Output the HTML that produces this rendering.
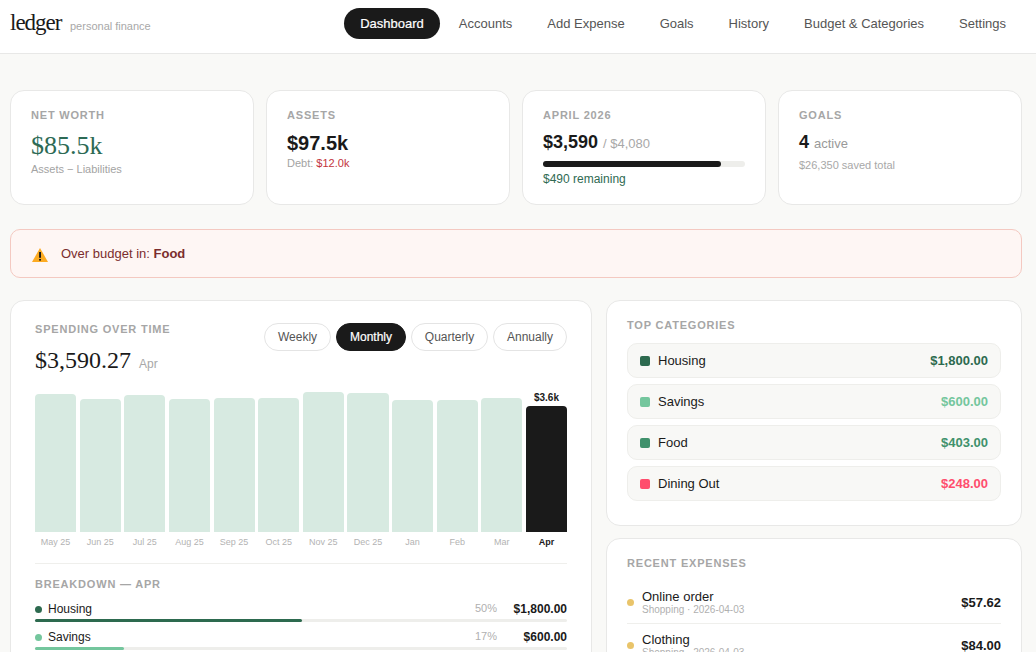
<!DOCTYPE html>
<html><head><meta charset="utf-8">
<style>
*{box-sizing:border-box;margin:0;padding:0}
html,body{width:1036px;height:652px;overflow:hidden}
body{background:#f9f9f7;font-family:"Liberation Sans",sans-serif;color:#1a1a1a;position:relative}
.t{position:absolute;line-height:20px;white-space:nowrap}
.hdr{position:absolute;left:0;top:0;width:1036px;height:54px;background:#fff;border-bottom:1px solid #e8e8e7}
.logo{left:10px;top:13px;font-family:"Liberation Serif",serif;font-size:23px;letter-spacing:-1px;color:#1a1a1a}
.sub{left:70px;top:16px;font-size:11px;color:#a8a8a8}
.nav{position:absolute;right:14px;top:8px;display:flex;gap:3px}
.nav a{display:block;font-size:13px;line-height:15px;padding:8px 16px;border-radius:16px;color:#555;text-decoration:none;white-space:nowrap}
.nav a.on{background:#1a1a1a;color:#fff;-webkit-text-stroke:0.2px #fff}

.card{position:absolute;top:90px;width:244px;height:115px;background:#fff;border:1px solid #e8e8e7;border-radius:14px}
.lbl{font-size:11px;font-weight:bold;letter-spacing:0.8px;color:#a6a6a6}
.alert{position:absolute;left:10px;top:229px;width:1012px;height:49px;background:#fef6f4;border:1px solid #f4c9c1;border-radius:10px}
.panel{position:absolute;background:#fff;border:1px solid #e8e8e7;border-radius:14px}
.seg{position:absolute;top:323px;height:28px;border:1px solid #e4e4e4;border-radius:14px;font-size:12px;line-height:26px;text-align:center;color:#555;background:#fff}
.seg.on{background:#1a1a1a;border-color:#1a1a1a;color:#fff;-webkit-text-stroke:0.2px #fff}
.bar{position:absolute;background:#d7eae1;border-radius:4px 4px 0 0}
.bar.on{background:#1a1a1a}
.mlab{position:absolute;top:532px;line-height:20px;font-size:9px;color:#b3b3b3;text-align:center;white-space:nowrap}
.mlab.on{color:#1a1a1a;font-weight:bold}
.row{position:absolute;left:627px;width:374px;height:35px;background:#f8f8f6;border:1px solid #eeeeeb;border-radius:10px}
.sq{position:absolute;left:12px;top:12px;width:10px;height:10px;border-radius:2px}
.rname{left:658px;font-size:13px}
.ramt{right:48px;font-size:13px;font-weight:bold;text-align:right}
</style></head><body>
<div class="hdr">
  <div class="nav">
    <a class="on">Dashboard</a><a>Accounts</a><a>Add Expense</a><a>Goals</a><a>History</a><a>Budget &amp; Categories</a><a>Settings</a>
  </div>
</div>
<div class="t logo">ledger</div>
<div class="t sub">personal finance</div>

<div class="card" style="left:10px"></div>
<div class="card" style="left:266px"></div>
<div class="card" style="left:522px"></div>
<div class="card" style="left:778px"></div>

<div class="t lbl" style="left:31px;top:105px">NET WORTH</div>
<div class="t" style="left:31px;top:136px;font-family:'Liberation Serif',serif;font-size:26px;color:#2d6a55">$85.5k</div>
<div class="t" style="left:31px;top:159px;font-size:11px;color:#a3a3a3">Assets − Liabilities</div>

<div class="t lbl" style="left:287px;top:105px">ASSETS</div>
<div class="t" style="left:287px;top:133px;font-size:20px;font-weight:bold">$97.5k</div>
<div class="t" style="left:287px;top:153px;font-size:11px;color:#a3a3a3">Debt: <span style="color:#c3343c">$12.0k</span></div>

<div class="t lbl" style="left:543px;top:105px">APRIL 2026</div>
<div class="t" style="left:543px;top:132px;font-size:18px;font-weight:bold">$3,590</div>
<div class="t" style="left:603px;top:134px;font-size:13px;color:#a8a8a8">/ $4,080</div>
<div style="position:absolute;left:543px;top:161px;width:202px;height:6px;border-radius:3px;background:#eeeeeb"><div style="width:178px;height:6px;border-radius:3px;background:#1a1a1a"></div></div>
<div class="t" style="left:543px;top:169px;font-size:12px;color:#2f6a52">$490 remaining</div>

<div class="t lbl" style="left:799px;top:105px">GOALS</div>
<div class="t" style="left:799px;top:132px;font-size:18px;font-weight:bold">4</div>
<div class="t" style="left:814px;top:134px;font-size:13px;color:#999">active</div>
<div class="t" style="left:799px;top:155px;font-size:11px;color:#a8a8a8">$26,350 saved total</div>

<div class="alert"></div>
<svg style="position:absolute;left:31px;top:247px" width="18" height="16" viewBox="0 0 18 16">
  <path d="M9 1 L17 15 L1 15 Z" fill="#fcab22"/>
  <rect x="8.1" y="5" width="1.9" height="5.8" fill="#1a1a1a"/>
  <rect x="8.1" y="12" width="1.9" height="1.6" fill="#1a1a1a"/>
</svg>
<div class="t" style="left:61px;top:244px;font-size:13px;color:#7b2d2d">Over budget in: <b>Food</b></div>

<div class="panel" style="left:10px;top:300px;width:582px;height:400px"></div>
<div class="t lbl" style="left:35px;top:319px">SPENDING OVER TIME</div>
<div class="t" style="left:35px;top:350px;font-family:'Liberation Serif',serif;font-size:24px">$3,590.27</div>
<div class="t" style="left:139px;top:354px;font-size:12px;color:#a8a8a8">Apr</div>
<div class="seg" style="left:264px;width:67px">Weekly</div>
<div class="seg on" style="left:336px;width:70px">Monthly</div>
<div class="seg" style="left:411px;width:77px">Quarterly</div>
<div class="seg" style="left:493px;width:74px">Annually</div>
<div class="t" style="left:525.88px;width:41.125px;top:388px;font-size:10px;font-weight:bold;text-align:center">$3.6k</div>
<div class="bar" style="left:35.00px;top:394.1px;width:41.125px;height:137.9px"></div>
<div class="mlab" style="left:35.00px;width:41.125px">May 25</div>
<div class="bar" style="left:79.62px;top:399.1px;width:41.125px;height:132.9px"></div>
<div class="mlab" style="left:79.62px;width:41.125px">Jun 25</div>
<div class="bar" style="left:124.25px;top:395.0px;width:41.125px;height:137.0px"></div>
<div class="mlab" style="left:124.25px;width:41.125px">Jul 25</div>
<div class="bar" style="left:168.88px;top:399.1px;width:41.125px;height:132.9px"></div>
<div class="mlab" style="left:168.88px;width:41.125px">Aug 25</div>
<div class="bar" style="left:213.50px;top:397.9px;width:41.125px;height:134.1px"></div>
<div class="mlab" style="left:213.50px;width:41.125px">Sep 25</div>
<div class="bar" style="left:258.12px;top:397.9px;width:41.125px;height:134.1px"></div>
<div class="mlab" style="left:258.12px;width:41.125px">Oct 25</div>
<div class="bar" style="left:302.75px;top:392.0px;width:41.125px;height:140.0px"></div>
<div class="mlab" style="left:302.75px;width:41.125px">Nov 25</div>
<div class="bar" style="left:347.38px;top:393.0px;width:41.125px;height:139.0px"></div>
<div class="mlab" style="left:347.38px;width:41.125px">Dec 25</div>
<div class="bar" style="left:392.00px;top:399.9px;width:41.125px;height:132.1px"></div>
<div class="mlab" style="left:392.00px;width:41.125px">Jan</div>
<div class="bar" style="left:436.62px;top:400.2px;width:41.125px;height:131.8px"></div>
<div class="mlab" style="left:436.62px;width:41.125px">Feb</div>
<div class="bar" style="left:481.25px;top:398.1px;width:41.125px;height:133.9px"></div>
<div class="mlab" style="left:481.25px;width:41.125px">Mar</div>
<div class="bar on" style="left:525.88px;top:406.2px;width:41.125px;height:125.8px"></div>
<div class="mlab on" style="left:525.88px;width:41.125px">Apr</div>
<div style="position:absolute;left:35px;top:563px;width:532px;height:1px;background:#efefec"></div>
<div class="t lbl" style="left:35px;top:574px">BREAKDOWN — APR</div>

<div style="position:absolute;left:35px;top:606px;width:7px;height:7px;border-radius:50%;background:#2d6a4f"></div>
<div class="t" style="left:48px;top:599px;font-size:12px">Housing</div>
<div class="t" style="left:475px;top:598px;font-size:11px;color:#b0b0b0">50%</div>
<div class="t" style="right:469px;top:599px;font-size:12px;font-weight:bold">$1,800.00</div>
<div style="position:absolute;left:35px;top:619px;width:532px;height:3px;border-radius:2px;background:#eeeeeb"><div style="width:266.7px;height:3px;border-radius:2px;background:#2d6a4f"></div></div>

<div style="position:absolute;left:35px;top:634px;width:7px;height:7px;border-radius:50%;background:#74c69d"></div>
<div class="t" style="left:48px;top:627px;font-size:12px">Savings</div>
<div class="t" style="left:475px;top:626px;font-size:11px;color:#b0b0b0">17%</div>
<div class="t" style="right:469px;top:627px;font-size:12px;font-weight:bold">$600.00</div>
<div style="position:absolute;left:35px;top:647px;width:532px;height:3px;border-radius:2px;background:#eeeeeb"><div style="width:88.9px;height:3px;border-radius:2px;background:#74c69d"></div></div>

<div class="panel" style="left:606px;top:300px;width:416px;height:226px"></div>
<div class="t lbl" style="left:627px;top:315px">TOP CATEGORIES</div>
<div class="row" style="top:343px"><div class="sq" style="background:#2d6a4f"></div></div>
<div class="t rname" style="top:351px">Housing</div>
<div class="t ramt" style="top:351px;color:#2d6a4f">$1,800.00</div>
<div class="row" style="top:384px"><div class="sq" style="background:#74c69d"></div></div>
<div class="t rname" style="top:392px">Savings</div>
<div class="t ramt" style="top:392px;color:#74c69d">$600.00</div>
<div class="row" style="top:425px"><div class="sq" style="background:#40916c"></div></div>
<div class="t rname" style="top:433px">Food</div>
<div class="t ramt" style="top:433px;color:#40916c">$403.00</div>
<div class="row" style="top:466px"><div class="sq" style="background:#ff4d6d"></div></div>
<div class="t rname" style="top:474px">Dining Out</div>
<div class="t ramt" style="top:474px;color:#ff4d6d">$248.00</div>

<div class="panel" style="left:606px;top:538px;width:416px;height:200px"></div>
<div class="t lbl" style="left:627px;top:553px">RECENT EXPENSES</div>
<div style="position:absolute;left:627px;top:599px;width:7px;height:7px;border-radius:50%;background:#e9c46a"></div>
<div class="t" style="left:642px;top:587px;font-size:13px">Online order</div>
<div class="t" style="left:642px;top:600px;font-size:10px;color:#b0b0b0">Shopping · 2026-04-03</div>
<div class="t" style="right:35px;top:593px;font-size:13px;font-weight:bold">$57.62</div>
<div style="position:absolute;left:627px;top:623px;width:374px;height:1px;background:#efefec"></div>
<div style="position:absolute;left:627px;top:642px;width:7px;height:7px;border-radius:50%;background:#e9c46a"></div>
<div class="t" style="left:642px;top:630px;font-size:13px">Clothing</div>
<div class="t" style="left:642px;top:643px;font-size:10px;color:#b0b0b0">Shopping · 2026-04-03</div>
<div class="t" style="right:35px;top:636px;font-size:13px;font-weight:bold">$84.00</div>
</body></html>
